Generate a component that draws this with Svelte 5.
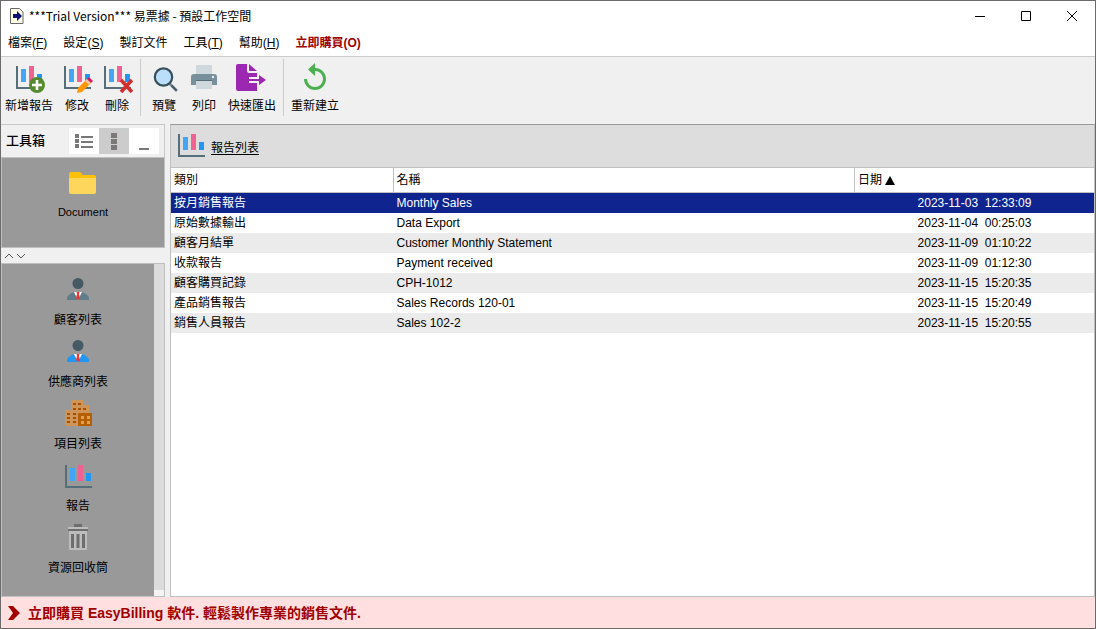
<script lang="ts">
  type Report = { category: string; name: string; date: string; time: string };

  const menus = [
    { label: "檔案", key: "F" },
    { label: "設定", key: "S" },
    { label: "製訂文件", key: "" },
    { label: "工具", key: "T" },
    { label: "幫助", key: "H" }
  ];

  const toolGroups = [
    [
      { icon: "add", label: "新增報告" },
      { icon: "edit", label: "修改" },
      { icon: "delete", label: "刪除" }
    ],
    [
      { icon: "preview", label: "預覽" },
      { icon: "print", label: "列印" },
      { icon: "export", label: "快速匯出" }
    ],
    [{ icon: "refresh", label: "重新建立" }]
  ];

  const lists = [
    { icon: "customer", label: "顧客列表" },
    { icon: "supplier", label: "供應商列表" },
    { icon: "items", label: "項目列表" },
    { icon: "chart", label: "報告" },
    { icon: "trash", label: "資源回收筒" }
  ];

  const reports: Report[] = [
    { category: "按月銷售報告", name: "Monthly Sales", date: "2023-11-03", time: "12:33:09" },
    { category: "原始數據輸出", name: "Data Export", date: "2023-11-04", time: "00:25:03" },
    { category: "顧客月結單", name: "Customer Monthly Statement", date: "2023-11-09", time: "01:10:22" },
    { category: "收款報告", name: "Payment received", date: "2023-11-09", time: "01:12:30" },
    { category: "顧客購買記錄", name: "CPH-1012", date: "2023-11-15", time: "15:20:35" },
    { category: "產品銷售報告", name: "Sales Records 120-01", date: "2023-11-15", time: "15:20:49" },
    { category: "銷售人員報告", name: "Sales 102-2", date: "2023-11-15", time: "15:20:55" }
  ];

  let selected = $state(0);
  let view = $state("tiles");
</script>

{#snippet chart()}
  <path d="M3 4h2v21h25v2H3z" fill="#546e7a" />
  <path d="M8 7h5v13H8z" fill="#42a5f5" />
  <path d="M16 4h5v16h-5z" fill="#f06292" />
  <path d="M24 12h5v8h-5z" fill="#2196f3" />
{/snippet}

{#snippet icon(name: string)}
  <svg class="icon" viewBox="0 0 32 32" width="32" height="32" aria-hidden="true">
    {#if name === "chart"}
      {@render chart()}
    {:else if name === "add"}
      {@render chart()}
      <circle cx="24" cy="23" r="8" fill="#558b2f" />
      <path d="M22.7 18h2.6v3.7H29v2.6h-3.7V28h-2.6v-3.7H19v-2.6h3.7z" fill="#fff" />
    {:else if name === "edit"}
      {@render chart()}
      <path d="M17 26 26 17l4 4-9 9-5 1z" fill="#ff9800" />
      <path d="m26 17 4 4-2 2-4-4z" fill="#ffc1a0" />
      <path d="m26 17 2-2 4 4-2 2z" fill="#d81b60" />
    {:else if name === "delete"}
      {@render chart()}
      <path d="m20 18 11 12M31 18 20 30" stroke="#d32f2f" stroke-width="3.6" />
    {:else if name === "preview"}
      <path d="m21 21 8 8" stroke="#78909c" stroke-width="2.6" />
      <path d="m23.5 23.5 5 5" stroke="#455a64" stroke-width="2" />
      <circle cx="15.5" cy="15" r="8.7" fill="#bbdefb" stroke="#37505c" stroke-width="2.2" />
    {:else if name === "print"}
      <path d="M8 3h16v9H8z" fill="#cfd8dc" />
      <path d="M3 15q0-3 3-3h20q3 0 3 3v8H3z" fill="#78909c" />
      <path d="M8 19h16v8H8z" fill="#cfd8dc" />
      <path d="M8 18h16v1H8z" fill="#546e7a" />
      <circle cx="25" cy="15" r="1.2" fill="#eceff1" />
    {:else if name === "export"}
      <path d="M2 2h9v7q0 2 2 2h8v18H2q-2 0-2-2V4q0-2 2-2z" fill="#9c27b0" />
      <path d="M13 2v6q0 1 1 1h7z" fill="#9c27b0" />
      <path d="M13 15h9v6h-9z" fill="#f5f0f6" />
      <path d="M13 17h10v-4l7 5-7 5v-4H13z" fill="#9c27b0" />
    {:else if name === "refresh"}
      <path d="M6.5 17A9.5 9.5 0 1 0 16 7.5" fill="none" stroke="#4caf50" stroke-width="3" />
      <path d="M9 7.5 16 1v13z" fill="#4caf50" />
    {:else if name === "customer" || name === "supplier"}
      <path d="M5 25v-2q0-3 7-6h8q7 3 7 6v2z" fill={name === "customer" ? "#607d8b" : "#2196f3"} />
      <path d="m12 17 4 8 4-8z" fill="#fff" />
      <path d="M14.5 17h3l-.5 2 1 4-2 2-2-2 1-4z" fill="#e53935" />
      <circle cx="16" cy="8.5" r="5.5" fill="#455a64" />
    {:else if name === "items"}
      <path d="M9 1h12v5h6v9H16v12H3V11h6z" fill="#cf9457" />
      <path d="M16 14h14v13H16z" fill="#b45f06" />
      <path
        d="M11 4h3v2h-3zm5 0h3v2h-3zm-5 5h3v2h-3zm5 0h3v2h-3zm5 0h3v2h-3zM5 14h3v2H5zm6 0h3v2h-3zm-6 4h3v2H5zm6 0h3v2h-3zm-6 4h3v2H5zm6 0h3v2h-3z"
        fill="#a85000"
      />
      <path d="M19 17h3v3h-3zm6 0h3v3h-3zm-6 5h3v3h-3zm6 0h3v3h-3z" fill="#e0a050" />
    {:else if name === "trash"}
      <path d="M12 1h8v3h-8z" fill="#6e6e6e" />
      <path d="M6 4h20v2H6z" fill="#bdbdbd" />
      <path d="M6 6h20v2H6z" fill="#6e6e6e" />
      <path d="M7 8h18v18q0 1-1 1H8q-1 0-1-1z" fill="#bdbdbd" />
      <path d="M9 11h3v14H9zm5.500 0h3v14h-3zm5.500 0h3v14h-3z" fill="#6e6e6e" />
    {:else if name === "folder"}
      <path d="M2 7q0-2 2-2h9l3 3h11q2 0 2 2v10H2z" fill="#ffc107" />
      <path d="M2 11h27v14q0 2-2 2H4q-2 0-2-2z" fill="#ffd65c" />
    {/if}
  </svg>
{/snippet}

<div class="window">
  <header class="titlebar">
    <svg viewBox="0 0 14 16" width="14" height="16" aria-hidden="true">
      <path d="M.5.5h9l3.500 3.500v11.500H.5z" fill="#fffde8" stroke="#666" />
      <path d="M3 6h4V3l5 5-5 5v-3H3z" fill="#0a1172" />
    </svg>
    <h1>***Trial Version*** 易票據 - 預設工作空間</h1>
    <div class="window-buttons">
      <button aria-label="Minimize">
        <svg viewBox="0 0 12 12" width="12" height="12"><path d="M1 6.5h10" stroke="#000" /></svg>
      </button>
      <button aria-label="Maximize">
        <svg viewBox="0 0 12 12" width="12" height="12"><path d="M1.5 1.5h9v9h-9z" fill="none" stroke="#000" /></svg>
      </button>
      <button aria-label="Close">
        <svg viewBox="0 0 12 12" width="12" height="12"><path d="m1 1 10 10M11 1 1 11" stroke="#000" /></svg>
      </button>
    </div>
  </header>

  <nav class="menubar">
    {#each menus as menu}
      <button>{menu.label}{#if menu.key}(<u>{menu.key}</u>){/if}</button>
    {/each}
    <button class="buy">立即購買(O)</button>
  </nav>

  <div class="toolbar">
    {#each toolGroups as group}
      <div class="group">
        {#each group as tool}
          <button class:wide={tool.label.length > 2}>
            {@render icon(tool.icon)}
            <span>{tool.label}</span>
          </button>
        {/each}
      </div>
    {/each}
  </div>

  <div class="body">
    <aside>
      <div class="toolbox-header">
        <h2>工具箱</h2>
        <div class="views">
          <button aria-label="List view" class:active={view === "list"} onclick={() => (view = "list")}>
            <svg viewBox="0 0 20 16" width="20" height="16">
              <path d="M1 1h4v4H1zm0 5h4v4H1zm0 5h4v4H1zM7 3h12v2H7zm0 5h12v2H7zm0 5h12v2H7z" fill="#777" />
            </svg>
          </button>
          <button aria-label="Icon view" class:active={view === "tiles"} onclick={() => (view = "tiles")}>
            <svg viewBox="0 0 20 18" width="20" height="18">
              <path d="M7 1h6v5H7zm0 6h6v5H7zm0 6h6v5H7z" fill="#7d7878" />
            </svg>
          </button>
          <button aria-label="Collapse" class:active={view === "none"} onclick={() => (view = "none")}>
            <svg viewBox="0 0 20 18" width="20" height="18"><path d="M5 16h10v2H5z" fill="#7d7878" /></svg>
          </button>
        </div>
      </div>

      <div class="documents">
        <button class="entry">
          {@render icon("folder")}
          <span>Document</span>
        </button>
      </div>

      <button class="splitter" aria-label="Resize panels">
        <svg viewBox="0 0 24 8" width="24" height="8">
          <path d="m1 6 4-4 4 4M13 2l4 4 4-4" fill="none" stroke="#555" />
        </svg>
      </button>

      <div class="lists">
        <div class="entries">
          {#each lists as entry}
            <button class="entry">
              {@render icon(entry.icon)}
              <span>{entry.label}</span>
            </button>
          {/each}
        </div>
        <div class="track"></div>
      </div>
    </aside>

    <main>
      <div class="list-header">
        {@render icon("chart")}
        <a href="#reports">報告列表</a>
      </div>
      <table id="reports">
        <thead>
          <tr>
            <th class="category">類別</th>
            <th class="name">名稱</th>
            <th aria-sort="ascending">
              日期
              <svg viewBox="0 0 10 10" width="10" height="10" aria-hidden="true"><path d="m5 1 5 9H0z" /></svg>
            </th>
          </tr>
        </thead>
        <tbody>
          {#each reports as report, i}
            <tr class:selected={selected === i} onclick={() => (selected = i)}>
              <td>{report.category}</td>
              <td>{report.name}</td>
              <td class="date">{report.date}&nbsp; {report.time}</td>
            </tr>
          {/each}
        </tbody>
      </table>
    </main>
  </div>

  <footer>
    <svg viewBox="0 0 12 14" width="12" height="14" aria-hidden="true">
      <path d="M0 0h5l7 7-7 7H0l5-7z" fill="#a00000" />
    </svg>
    <a href="#buy">立即購買 EasyBilling 軟件. 輕鬆製作專業的銷售文件.</a>
  </footer>
</div>

<style>
  :global(body) {
    margin: 0;
  }

  .window {
    box-sizing: border-box;
    min-height: 100vh;
    display: flex;
    flex-direction: column;
    border: 1px solid #6b6b6b;
    background: #f0f0f0;
    color: #000;
    font-family: "Liberation Sans", "Noto Sans CJK TC", sans-serif;
    font-size: 12px;
    line-height: 16px;
  }

  button {
    padding: 0;
    border: none;
    background: none;
    color: inherit;
    font: inherit;
  }

  svg {
    display: block;
    flex: none;
  }

  .titlebar {
    display: flex;
    align-items: center;
    height: 29px;
    padding-left: 9px;
    background: #fff;
  }

  h1 {
    flex: 1;
    margin: 0 0 0 5px;
    font-family: "Noto Sans CJK TC", sans-serif;
    font-size: 12px;
    font-weight: 400;
  }

  .window-buttons {
    display: flex;
  }

  .window-buttons button {
    display: flex;
    align-items: center;
    justify-content: center;
    width: 46px;
    height: 28px;
  }

  .menubar {
    display: flex;
    gap: 16px;
    height: 26px;
    padding-left: 7px;
    border-bottom: 1px solid #ccc;
    background: #fff;
  }

  .menubar .buy {
    color: #a00000;
    font-weight: 700;
  }

  .toolbar {
    display: flex;
    height: 57px;
    padding: 2px 0 8px;
  }

  .group {
    display: flex;
  }

  .group + .group {
    margin-left: 3px;
    padding-left: 3px;
    border-left: 1px solid #ccc;
  }

  .toolbar button {
    display: flex;
    flex-direction: column;
    align-items: center;
    gap: 4px;
    width: 40px;
    padding-top: 3px;
    white-space: nowrap;
  }

  .toolbar .wide {
    width: 56px;
  }

  .body {
    flex: 1;
    display: flex;
    gap: 5px;
  }

  aside {
    box-sizing: border-box;
    flex: none;
    display: flex;
    flex-direction: column;
    width: 164px;
  }

  .toolbox-header {
    display: flex;
    justify-content: space-between;
    align-items: center;
    height: 32px;
    padding: 0 5px;
    border-top: 1px solid #c8c8c8;
    border-right: 1px solid #c8c8c8;
  }

  h2 {
    margin: 0;
    font-size: 13px;
    font-weight: 500;
  }

  .views {
    display: flex;
  }

  .views button {
    display: flex;
    align-items: center;
    justify-content: center;
    width: 30px;
    height: 26px;
    background: #fff;
  }

  .views .active {
    background: #ccc;
  }

  .documents {
    box-sizing: border-box;
    height: 91px;
    padding-top: 9px;
    border: 1px solid #c0c0c0;
    background: #999;
  }

  .entry {
    display: flex;
    flex-direction: column;
    align-items: center;
    gap: 5px;
    width: 100%;
  }

  .documents .entry {
    font-size: 11px;
  }

  .splitter {
    display: flex;
    align-items: center;
    height: 15px;
    padding-left: 3px;
  }

  .lists {
    flex: 1;
    display: flex;
    border: 1px solid #c0c0c0;
    background: #999;
  }

  .entries {
    flex: 1;
    display: flex;
    flex-direction: column;
    gap: 9px;
    padding: 11px 0;
  }

  .track {
    width: 10px;
    border-bottom: 6px solid #f4f4f4;
    background: #dcdcdc;
  }

  main {
    flex: 1;
    min-width: 0;
    border: 1px solid #c0c0c0;
    border-top-color: #999;
    background: #fff;
  }

  .list-header {
    display: flex;
    align-items: center;
    gap: 4px;
    height: 42px;
    padding-left: 4px;
    border-bottom: 1px solid #c0c0c0;
    background: #ddd;
  }

  .list-header a {
    padding-top: 3px;
    color: #000;
    text-underline-offset: 2px;
  }

  table {
    width: 100%;
    border-collapse: separate;
    border-spacing: 0;
    table-layout: fixed;
  }

  th,
  td {
    box-sizing: border-box;
    padding: 0 3px;
    text-align: left;
    white-space: nowrap;
  }

  th {
    height: 25px;
    border-bottom: 1px solid #c0c0c0;
    font-weight: 400;
  }

  th + th {
    border-left: 1px solid #c0c0c0;
  }

  th svg {
    display: inline-block;
    vertical-align: -1px;
  }

  .category {
    width: 24%;
  }

  .name {
    width: 50%;
  }

  td {
    height: 20px;
  }

  td + td {
    padding-left: 4px;
  }

  .date {
    text-align: center;
  }

  tbody tr:nth-child(odd) {
    background: #ebebeb;
  }

  tbody tr.selected {
    background: #102490;
    color: #fff;
  }

  footer {
    display: flex;
    align-items: center;
    gap: 8px;
    height: 31px;
    padding-left: 7px;
    background: #ffdfdf;
  }

  footer a {
    color: #a00000;
    font-size: 14px;
    font-weight: 700;
    text-decoration: none;
  }
</style>
